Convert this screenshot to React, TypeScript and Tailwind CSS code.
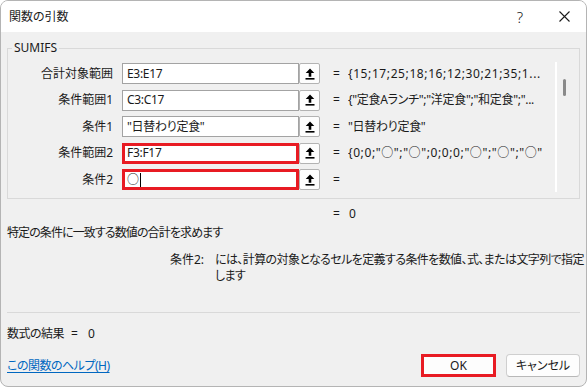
import React from "react";

const rows = [
  { label: "合計対象範囲", value: "E3:E17", result: "{15;17;25;18;16;12;30;21;35;1...", wide: true },
  { label: "条件範囲1", value: "C3:C17", result: '{"定食Aランチ";"洋定食";"和定食";"...' },
  { label: "条件1", value: '"日替わり定食"', result: '"日替わり定食"' },
  { label: "条件範囲2", value: "F3:F17", result: '{0;0;"○";"○";0;0;0;"○";"○";"○"', marked: true, wide: true },
  { label: "条件2", value: "○", result: "", marked: true, caret: true },
];

function CollapseIcon() {
  return (
    <svg width="10" height="12" viewBox="0 0 10 12" className="text-black">
      <path d="M5 0.5 L9.3 5 H6.3 V8.8 H3.7 V5 H0.7 Z" fill="currentColor" />
      <rect x="0.5" y="10" width="9" height="1.6" fill="currentColor" />
    </svg>
  );
}

function ArgRow({ row }: { row: (typeof rows)[number] }) {
  return (
    <div className="flex h-[21px] items-center">
      <div className="w-[105px] shrink-0 text-right leading-[16px]">{row.label}</div>
      <div
        className={
          row.marked
            ? "ml-[9px] flex h-[21px] w-[177px] shrink-0 items-center border-[3px] border-[#e81b23] bg-white pl-[2px]"
            : "ml-[9px] flex h-[21px] w-[177px] shrink-0 items-center border border-[#a3a3a3] bg-white pl-[4px]"
        }
      >
        <span className="leading-[16px] whitespace-nowrap tracking-[-0.3px]">{row.value}</span>
        {row.caret && <span className="ml-[1px] h-[14px] w-px bg-black" />}
      </div>
      <div className="flex h-[21px] w-[21px] shrink-0 items-center justify-center rounded-[2px] border border-[#b3b3b3] bg-[#fdfdfd]">
        <CollapseIcon />
      </div>
      <div className="ml-[13px] w-[15px] shrink-0 leading-[16px]">=</div>
      <div
        className={
          row.wide
            ? "w-[203px] shrink-0 overflow-hidden whitespace-nowrap leading-[16px] tracking-[0.6px]"
            : "w-[203px] shrink-0 overflow-hidden whitespace-nowrap leading-[16px] tracking-[-0.3px]"
        }
      >
        {row.result}
      </div>
    </div>
  );
}

export default function App() {
  return (
    <div className="h-[388px] w-[588px] bg-white font-['Noto_Sans','Noto_Sans_CJK_JP',sans-serif] text-[12px] text-[#1a1a1a] [font-feature-settings:'palt']">
      <div className="flex h-[387px] w-[587px] flex-col overflow-hidden rounded-[8px] border border-[#b4b4b4] bg-[#f0f0f0]">
        <header className="flex h-[31px] shrink-0 items-center bg-white pl-[8px]">
          <span className="leading-[16px]">関数の引数</span>
          <span className="ml-auto flex w-[44px] justify-center text-[15px] font-light leading-[16px]">?</span>
          <span className="flex w-[44px] items-center justify-center">
            <svg width="11" height="11" viewBox="0 0 11 11">
              <path d="M0.5 0.5 L10.5 10.5 M10.5 0.5 L0.5 10.5" stroke="#1a1a1a" strokeWidth="1.1" />
            </svg>
          </span>
        </header>

        <main className="flex flex-1 flex-col px-[6px]">
          <fieldset className="mt-[9px] border border-[#d9d9d9] pt-[8px] pb-[6px]">
            <legend className="ml-[4px] px-[2px] leading-[14px]">SUMIFS</legend>
            <div className="flex items-start">
              <div className="flex flex-col gap-[5.5px]">
                {rows.map((r) => (
                  <ArgRow key={r.label} row={r} />
                ))}
              </div>
              <div className="-mt-[1px] ml-[4px] h-[130px] w-[17px] border-l-2 border-white">
                <div className="mt-[17px] ml-[6px] h-[17px] w-[3px] rounded-full bg-[#8a8a8a]" />
              </div>
            </div>
          </fieldset>

          <div className="mt-[7px] flex pl-[326px] leading-[16px]">
            <span className="w-[16px]">=</span>
            <span>0</span>
          </div>

          <p className="mt-[3px] leading-[16px] tracking-[-0.9px]">特定の条件に一致する数値の合計を求めます</p>

          <div className="mt-[11px] flex leading-[16px]">
            <div className="w-[197px] shrink-0 text-right">条件2:</div>
            <div className="ml-[11px] whitespace-nowrap tracking-[-0.6px]">
              <div>には、計算の対象となるセルを定義する条件を数値、式、または文字列で指定</div>
              <div>します</div>
            </div>
          </div>

          <div className="mt-[28px] h-px bg-[#d9d9d9]" />

          <div className="mt-[13px] flex leading-[16px]">
            <span className="tracking-[-0.5px]">数式の結果</span>
            <span className="ml-[7px]">=</span>
            <span className="ml-[10px]">0</span>
          </div>

          <div className="mt-[12px] flex items-center">
            <a className="leading-[16px] tracking-[-0.5px] text-[#0067c0] underline underline-offset-2">この関数のヘルプ(H)</a>
            <button className="ml-auto flex h-[23px] w-[75px] items-center justify-center border-[3px] border-[#e81b23] bg-[#fdfdfd] leading-[16px]">
              OK
            </button>
            <button className="ml-[10px] flex h-[23px] w-[74px] items-center justify-center rounded-[4px] border border-[#cfcfcf] border-b-[#b8b8b8] bg-[#fdfdfd] leading-[16px]">
              キャンセル
            </button>
          </div>
        </main>
      </div>
    </div>
  );
}
